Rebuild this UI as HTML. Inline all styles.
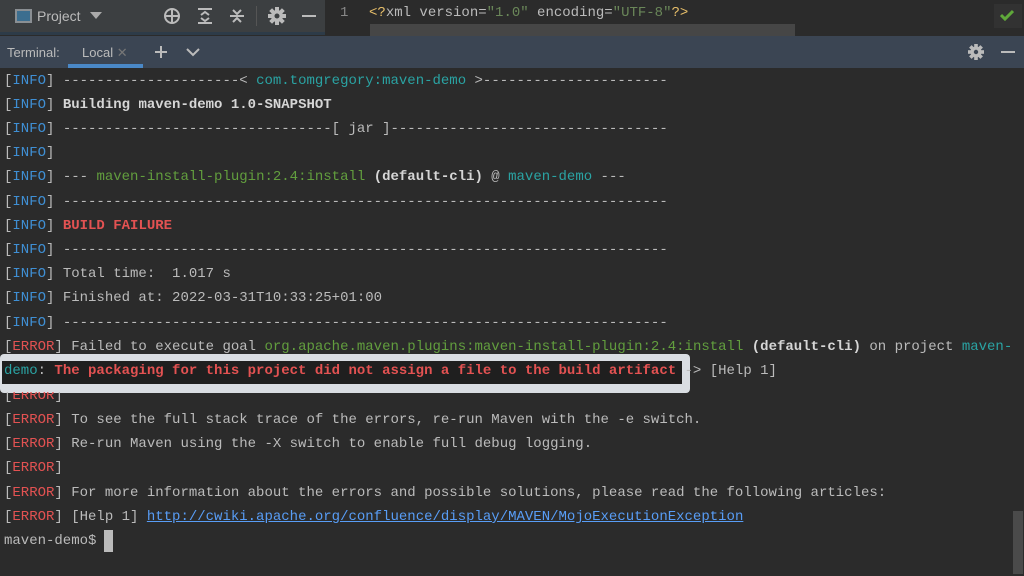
<!DOCTYPE html>
<html><head><meta charset="utf-8"><style>
*{margin:0;padding:0;box-sizing:border-box}
body{width:1024px;height:576px;overflow:hidden;background:#2b2b2b;font-family:"Liberation Sans",sans-serif;position:relative}
.abs{position:absolute}
.mono{font-family:"Liberation Mono","DejaVu Sans Mono",monospace;font-size:14px;white-space:pre;color:#bbbbbb}
.l{position:absolute;left:4px;height:24px;line-height:24px}
.i{color:#3f8fd4}.e{color:#e35252}.t{color:#2aa3a3}.g{color:#629e3e}.w{color:#d6d6d6;font-weight:bold}
.link{color:#589df6;text-decoration:underline}
</style></head><body>
<!-- top left panel -->
<div class="abs" style="left:0;top:0;width:325px;height:32px;background:#3c3f41"></div>
<div class="abs" style="left:0;top:32px;width:325px;height:3px;background:#2d3b48"></div>
<div class="abs" style="left:15px;top:9px;width:17px;height:14px;border:2px solid #8a8f93;background:#3c6e8f"></div>
<div class="abs" style="left:37px;top:8px;font-size:14px;color:#bbbbbb">Project</div>
<svg class="abs" style="left:90px;top:12px" width="12" height="8"><path d="M0 0H12L6 7Z" fill="#aaa"/></svg>
<svg class="abs" style="left:163px;top:7px" width="18" height="18"><circle cx="9" cy="9" r="7" fill="none" stroke="#bbb" stroke-width="2"/><path d="M9 2V16M2 9H16" stroke="#bbb" stroke-width="2"/></svg>
<svg class="abs" style="left:196px;top:7px" width="18" height="18"><path d="M2 2H16M2 16H16M5 8L9 5 13 8M5 11L9 14 13 11" stroke="#bbb" stroke-width="2" fill="none"/></svg>
<svg class="abs" style="left:228px;top:7px" width="18" height="18"><path d="M2 9H16M5 3L9 7 13 3M5 15L9 11 13 15" stroke="#bbb" stroke-width="2" fill="none"/></svg>
<div class="abs" style="left:256px;top:6px;width:1px;height:20px;background:#555"></div>
<svg class="abs" style="left:268px;top:7px" width="18" height="18"><g fill="#bbb"><circle cx="9" cy="9" r="6"/><rect x="7" y="0" width="4" height="18"/><rect x="0" y="7" width="18" height="4"/><rect x="7" y="0" width="4" height="18" transform="rotate(45 9 9)"/><rect x="7" y="0" width="4" height="18" transform="rotate(-45 9 9)"/></g><circle cx="9" cy="9" r="2.5" fill="#3c3f41"/></svg>
<div class="abs" style="left:302px;top:15px;width:14px;height:2px;background:#bbb"></div>
<!-- editor -->
<div class="abs" style="left:325px;top:0;width:699px;height:36px;background:#2b2b2b"></div>
<div class="abs mono" style="left:340px;top:5px;color:#888">1</div>
<div class="abs mono" style="left:369px;top:5px"><span style="color:#e8bf6a">&lt;?</span>xml version=<span style="color:#6a8759">"1.0"</span> encoding=<span style="color:#6a8759">"UTF-8"</span><span style="color:#e8bf6a">?&gt;</span></div>
<div class="abs" style="left:370px;top:24px;width:425px;height:12px;background:#464646"></div>
<div class="abs" style="left:994px;top:4px;width:28px;height:24px;background:#323232"></div>
<svg class="abs" style="left:1000px;top:9px" width="14" height="12"><path d="M1 6L5 10 13 2" stroke="#5fa83a" stroke-width="3" fill="none"/></svg>
<!-- terminal header -->
<div class="abs" style="left:0;top:36px;width:1024px;height:32px;background:#3b4553"></div>
<div class="abs" style="left:7px;top:45px;font-size:13px;color:#bbbbbb">Terminal:</div>
<div class="abs" style="left:82px;top:45px;font-size:13px;color:#bbbbbb">Local <span style="color:#777">✕</span></div>
<div class="abs" style="left:68px;top:64px;width:75px;height:4px;background:#4a88c7"></div>
<svg class="abs" style="left:154px;top:45px" width="14" height="14"><path d="M7 1V13M1 7H13" stroke="#bbb" stroke-width="2"/></svg>
<svg class="abs" style="left:186px;top:47px" width="14" height="10"><path d="M1 2L7 8 13 2" stroke="#bbb" stroke-width="2" fill="none"/></svg>
<svg class="abs" style="left:968px;top:44px" width="16" height="16"><g fill="#bbb"><circle cx="8" cy="8" r="5.5"/><rect x="6.2" y="0" width="3.6" height="16"/><rect x="0" y="6.2" width="16" height="3.6"/><rect x="6.2" y="0" width="3.6" height="16" transform="rotate(45 8 8)"/><rect x="6.2" y="0" width="3.6" height="16" transform="rotate(-45 8 8)"/></g><circle cx="8" cy="8" r="2.2" fill="#3b4553"/></svg>
<div class="abs" style="left:1001px;top:51px;width:14px;height:2px;background:#bbb"></div>
<!-- highlight box -->
<div class="abs" style="left:0;top:354px;width:690px;height:39px;background:#d9dde2;border-radius:4px"></div>
<div class="abs" style="left:2px;top:361px;width:680px;height:23px;background:#1f1f1f"></div>
<!-- scrollbar -->
<div class="abs" style="left:1013px;top:511px;width:10px;height:63px;background:#4a4a4a"></div>
<!-- terminal lines -->
<div class="mono">
<div class="l" style="top:69px">[<span class="i">INFO</span>] ---------------------&lt; <span class="t">com.tomgregory:maven-demo</span> &gt;----------------------</div>
<div class="l" style="top:93px">[<span class="i">INFO</span>] <span class="w">Building maven-demo 1.0-SNAPSHOT</span></div>
<div class="l" style="top:117px">[<span class="i">INFO</span>] --------------------------------[ jar ]---------------------------------</div>
<div class="l" style="top:141px">[<span class="i">INFO</span>]</div>
<div class="l" style="top:165px">[<span class="i">INFO</span>] --- <span class="g">maven-install-plugin:2.4:install</span> <span class="w">(default-cli)</span> @ <span class="t">maven-demo</span> ---</div>
<div class="l" style="top:190px">[<span class="i">INFO</span>] ------------------------------------------------------------------------</div>
<div class="l" style="top:214px">[<span class="i">INFO</span>] <span class="e" style="font-weight:bold">BUILD FAILURE</span></div>
<div class="l" style="top:238px">[<span class="i">INFO</span>] ------------------------------------------------------------------------</div>
<div class="l" style="top:262px">[<span class="i">INFO</span>] Total time:  1.017 s</div>
<div class="l" style="top:286px">[<span class="i">INFO</span>] Finished at: 2022-03-31T10:33:25+01:00</div>
<div class="l" style="top:311px">[<span class="i">INFO</span>] ------------------------------------------------------------------------</div>
<div class="l" style="top:335px">[<span class="e">ERROR</span>] Failed to execute goal <span class="g">org.apache.maven.plugins:maven-install-plugin:2.4:install</span> <span class="w">(default-cli)</span> on project <span class="t">maven-</span></div>
<div class="l" style="top:359px"><span class="t">demo</span>: <span class="e" style="font-weight:bold">The packaging for this project did not assign a file to the build artifact</span> -&gt; [Help 1]</div>
<div class="l" style="top:384px;clip-path:inset(8px 0 0 0)">[<span class="e">ERROR</span>]</div>
<div class="l" style="top:408px">[<span class="e">ERROR</span>] To see the full stack trace of the errors, re-run Maven with the -e switch.</div>
<div class="l" style="top:432px">[<span class="e">ERROR</span>] Re-run Maven using the -X switch to enable full debug logging.</div>
<div class="l" style="top:456px">[<span class="e">ERROR</span>]</div>
<div class="l" style="top:481px">[<span class="e">ERROR</span>] For more information about the errors and possible solutions, please read the following articles:</div>
<div class="l" style="top:505px">[<span class="e">ERROR</span>] [Help 1] <span class="link">http://cwiki.apache.org/confluence/display/MAVEN/MojoExecutionException</span></div>
<div class="l" style="top:529px">maven-demo$ </div>
</div>
<div class="abs" style="left:104px;top:530px;width:9px;height:22px;background:#bbbbbb"></div>
</body></html>
